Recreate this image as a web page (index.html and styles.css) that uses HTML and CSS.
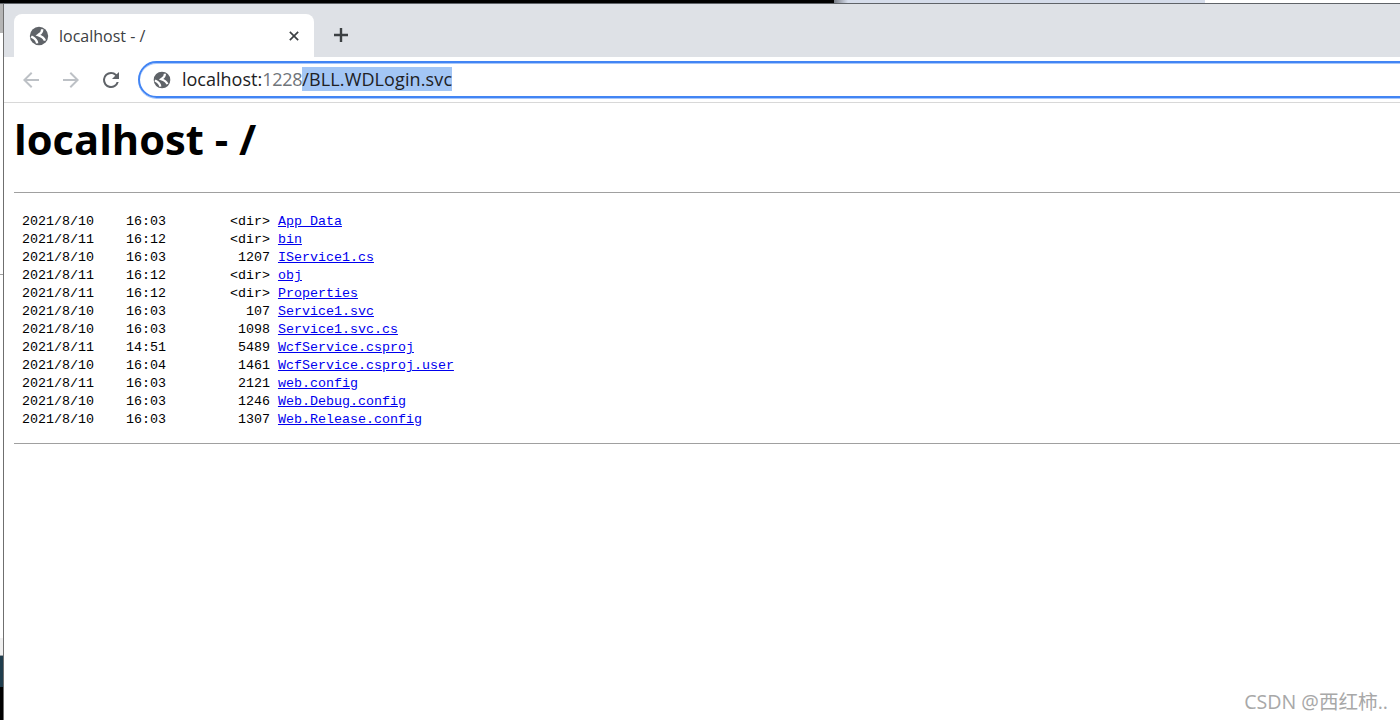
FILE: index.html
```html
<!DOCTYPE html>
<html lang="en">
<head>
  <meta charset="UTF-8" />
  <title>localhost - /</title>
  <link rel="stylesheet" href="styles.css">
</head>
<body>
  <!-- Bits of the desktop behind the window -->
  <div class="desk-top">
    <div class="desk-black"></div>
    <div class="desk-blue"></div>
    <div class="desk-white"></div>
  </div>

  <div class="shot">
    <div class="desk-left">
      <div class="left-gray"></div>
      <div class="left-white-a"></div>
      <div class="left-tick"></div>
      <div class="left-white-b"></div>
      <div class="left-light"></div>
      <div class="left-line"></div>
      <div class="left-teal"></div>
      <div class="left-black"></div>
    </div>

    <div class="window">
      <!-- Tab strip -->
      <div class="tabstrip">
        <div class="tab">
          <svg class="globe tab-globe" viewBox="0 0 24 24"><circle cx="12" cy="12" r="10"/><path class="globe-cut" d="M3.500 12.500C6 14 9.500 15 10 20M15.500 4.500C15.500 9 13 9.500 11 11C14 12 17 13 18.500 17"/></svg>
          <span class="tab-title">localhost - /</span>
          <svg class="tab-close" viewBox="0 0 12 12"><path d="M1 1l10 10M11 1L1 11"/></svg>
        </div>
        <svg class="new-tab" viewBox="0 0 16 16"><path d="M8 1v14M1 8h14"/></svg>
      </div>

      <!-- Toolbar -->
      <div class="toolbar">
        <svg class="nav-icon" viewBox="0 0 16 16"><path d="M16 7H3.800l5.600-5.600L8 0 0 8l8 8 1.400-1.400L3.800 9H16z"/></svg>
        <svg class="nav-icon" viewBox="0 0 16 16"><path d="M0 7h12.200L6.600 1.400 8 0l8 8-8 8-1.400-1.400L12.200 9H0z"/></svg>
        <svg class="nav-icon reload" viewBox="0 0 24 24"><path d="M17.650 6.350A8 8 0 0 0 12 4a8 8 0 1 0 7.730 10h-2.080A6 6 0 1 1 12 6c1.660 0 3.140.69 4.220 1.780L13 11h7V4l-2.350 2.350z"/></svg>
        <div class="omnibox">
          <svg class="globe box-globe" viewBox="0 0 24 24"><circle cx="12" cy="12" r="10"/><path class="globe-cut" d="M3.500 12.500C6 14 9.500 15 10 20M15.500 4.500C15.500 9 13 9.500 11 11C14 12 17 13 18.500 17"/></svg>
          <span class="url-host">localhost:</span><span class="url-port">1228</span><span class="url-sel">/BLL.WDLogin.svc</span>
        </div>
      </div>

      <!-- Directory listing -->
      <div class="page">
        <h1>localhost - /</h1>
        <hr>
        <pre> 2021/8/10    16:03        &lt;dir&gt; <a href="#">App_Data</a>
 2021/8/11    16:12        &lt;dir&gt; <a href="#">bin</a>
 2021/8/10    16:03         1207 <a href="#">IService1.cs</a>
 2021/8/11    16:12        &lt;dir&gt; <a href="#">obj</a>
 2021/8/11    16:12        &lt;dir&gt; <a href="#">Properties</a>
 2021/8/10    16:03          107 <a href="#">Service1.svc</a>
 2021/8/10    16:03         1098 <a href="#">Service1.svc.cs</a>
 2021/8/11    14:51         5489 <a href="#">WcfService.csproj</a>
 2021/8/10    16:04         1461 <a href="#">WcfService.csproj.user</a>
 2021/8/11    16:03         2121 <a href="#">web.config</a>
 2021/8/10    16:03         1246 <a href="#">Web.Debug.config</a>
 2021/8/10    16:03         1307 <a href="#">Web.Release.config</a></pre>
        <hr>
      </div>

      <div class="watermark">CSDN @西红柿..</div>
    </div>
  </div>
</body>
</html>
```

FILE: styles.css
```css
html,
body {
  margin: 0;
  padding: 0;
  height: 720px;
  overflow: hidden;
  background: #fff;
}

body {
  display: flex;
  flex-direction: column;
}

/* =============== DESKTOP EDGES =============== */
.desk-top {
  display: flex;
  height: 3px;
  border-bottom: 1px solid #5f6368;
  flex-shrink: 0;
}
.desk-black {
  width: 834px;
  background: #000;
}
.desk-blue {
  width: 371px;
  background: linear-gradient(to right, #777b84, #d5dcea 14px);
}
.desk-white {
  flex: 1;
  background: #fff;
}

.shot {
  flex: 1;
  display: flex;
  min-height: 0;
}

.desk-left {
  width: 3px;
  display: flex;
  flex-direction: column;
  flex-shrink: 0;
}
.left-gray {
  height: 29px;
  background: #b4b4b4;
}
.left-white-a {
  height: 241px;
  background: #fff;
}
.left-tick {
  height: 1px;
  background: #a0a0a0;
}
.left-white-b {
  height: 363px;
  background: #fff;
}
.left-light {
  height: 17px;
  background: #f0f0f0;
}
.left-line {
  height: 1px;
  background: #9aa0a6;
}
.left-teal {
  height: 31px;
  background: #1f3d4d;
}
.left-black {
  flex: 1;
  background: #000;
}

.window {
  flex: 1;
  min-width: 0;
  position: relative;
  border-left: 1px solid #6f6f6f;
  display: flex;
  flex-direction: column;
}

/* =============== TAB STRIP =============== */
.tabstrip {
  height: 53px;
  background: #dee1e6;
  display: flex;
  align-items: flex-end;
  flex-shrink: 0;
  padding-left: 10px;
}
.tab {
  width: 300px;
  height: 43px;
  background: #fff;
  border-radius: 8px 8px 0 0;
  display: flex;
  align-items: center;
  box-sizing: border-box;
  padding: 0 15px 0 14px;
}
.globe {
  fill: #5f6368;
  flex-shrink: 0;
}
.globe-cut {
  fill: none;
  stroke: #fff;
  stroke-width: 2.6;
}
.tab-globe {
  width: 22px;
  height: 22px;
}
.tab-title {
  flex: 1;
  margin-left: 9px;
  font: 16px "Open Sans", sans-serif;
  color: #3c4043;
}
.tab-close {
  width: 10px;
  height: 10px;
  fill: none;
  stroke: #3c4043;
  stroke-width: 2;
}
.new-tab {
  width: 16px;
  height: 16px;
  margin: 0 0 14px 19px;
  fill: none;
  stroke: #3c4043;
  stroke-width: 2.4;
}

/* =============== TOOLBAR =============== */
.toolbar {
  height: 45px;
  border-bottom: 1px solid #d8d8d8;
  display: flex;
  align-items: center;
  flex-shrink: 0;
  padding-left: 19px;
  gap: 24px;
}
.nav-icon {
  width: 16px;
  height: 16px;
  fill: #bdc1c6;
  flex-shrink: 0;
}
.nav-icon.reload {
  width: 24px;
  height: 24px;
  margin-left: -4px;
  fill: #5f6368;
}
.omnibox {
  flex: 1;
  height: 37px;
  margin-left: -9px;
  margin-right: -40px;
  box-sizing: border-box;
  border: 2px solid #4285f4;
  border-radius: 19px;
  box-shadow: inset 0 1px 0 #a8c7fa, 0 1px 0 #a8c7fa;
  display: flex;
  align-items: center;
  padding: 0 0 2px 12px;
  font: 18px "Open Sans", sans-serif;
  white-space: nowrap;
}
.box-globe {
  width: 20px;
  height: 20px;
  margin: 2px 10px 0 0;
}
.url-host {
  color: #202124;
}
.url-port {
  color: #70757a;
  letter-spacing: -0.25px;
}
.url-sel {
  background: #a3c6f5;
  color: #202124;
  line-height: 24px;
  letter-spacing: 0.12px;
}

/* =============== PAGE =============== */
.page {
  padding-left: 10px;
}
.page h1 {
  margin: 11px 0 0;
  font: bold 41.7px/50px "Open Sans", sans-serif;
  color: #000;
}
.page hr {
  margin: 0;
  border: 0;
  height: 1px;
  background: #a0a0a0;
}
.page h1 + hr {
  margin-top: 28px;
}
.page pre {
  margin: 20px 0 14px;
  font: 13.33px/18px "Liberation Mono", monospace;
  color: #000;
}
.page a {
  color: #0000ee;
}

.watermark {
  position: absolute;
  right: 12px;
  bottom: 5px;
  font: 19.6px "Open Sans", "Noto Sans CJK SC", sans-serif;
  color: #a8a8a8;
}
```
